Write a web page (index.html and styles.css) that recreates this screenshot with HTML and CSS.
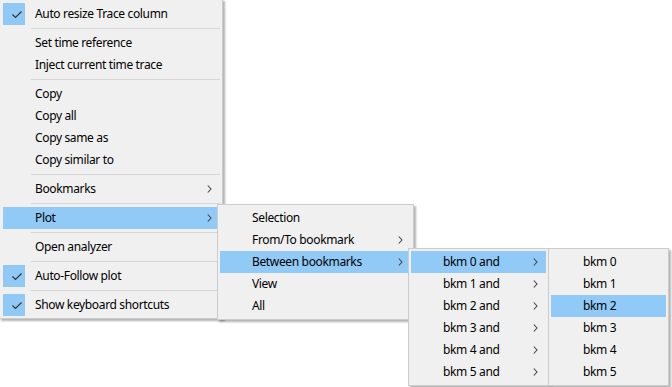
FILE: index.html
```html
<!DOCTYPE html>
<html lang="en">
<head>
  <meta charset="UTF-8">
  <meta name="viewport" content="width=device-width, initial-scale=1.0">
  <title>Trace context menu</title>
  <link rel="stylesheet" href="styles.css">
</head>
<body>

  <div class="desk">

    <div class="menu menu-main">
      <div class="item checked"><span class="gutter"><span class="check"><svg width="22" height="22" viewBox="0 0 22 22"><polyline points="9.5,11.5 12.5,14.5 18.5,8.5" fill="none" stroke="#333" stroke-width="1.2"/></svg></span></span><span class="label">Auto resize Trace column</span></div>
      <div class="sep"></div>
      <div class="item"><span class="gutter"></span><span class="label">Set time reference</span></div>
      <div class="item"><span class="gutter"></span><span class="label">Inject current time trace</span></div>
      <div class="sep"></div>
      <div class="item"><span class="gutter"></span><span class="label">Copy</span></div>
      <div class="item"><span class="gutter"></span><span class="label">Copy all</span></div>
      <div class="item"><span class="gutter"></span><span class="label">Copy same as</span></div>
      <div class="item"><span class="gutter"></span><span class="label">Copy similar to</span></div>
      <div class="sep"></div>
      <div class="item"><span class="gutter"></span><span class="label">Bookmarks</span><span class="arrow"><svg width="5" height="8" viewBox="0 0 5 8"><polyline points="0.8,0.5 4,4 0.8,7.5" fill="none" stroke="#444" stroke-width="1.1"/></svg></span></div>
      <div class="sep"></div>
      <div class="item active"><span class="gutter"></span><span class="label">Plot</span><span class="arrow"><svg width="5" height="8" viewBox="0 0 5 8"><polyline points="0.8,0.5 4,4 0.8,7.5" fill="none" stroke="#444" stroke-width="1.1"/></svg></span></div>
      <div class="sep"></div>
      <div class="item"><span class="gutter"></span><span class="label">Open analyzer</span></div>
      <div class="sep"></div>
      <div class="item checked"><span class="gutter"><span class="check"><svg width="22" height="22" viewBox="0 0 22 22"><polyline points="9.5,11.5 12.5,14.5 18.5,8.5" fill="none" stroke="#333" stroke-width="1.2"/></svg></span></span><span class="label">Auto-Follow plot</span></div>
      <div class="sep"></div>
      <div class="item checked"><span class="gutter"><span class="check"><svg width="22" height="22" viewBox="0 0 22 22"><polyline points="9.5,11.5 12.5,14.5 18.5,8.5" fill="none" stroke="#333" stroke-width="1.2"/></svg></span></span><span class="label">Show keyboard shortcuts</span></div>
    </div>

    <div class="menu menu-plot">
      <div class="item"><span class="gutter"></span><span class="label">Selection</span></div>
      <div class="item"><span class="gutter"></span><span class="label">From/To bookmark</span><span class="arrow"><svg width="5" height="8" viewBox="0 0 5 8"><polyline points="0.8,0.5 4,4 0.8,7.5" fill="none" stroke="#444" stroke-width="1.1"/></svg></span></div>
      <div class="item active"><span class="gutter"></span><span class="label">Between bookmarks</span><span class="arrow"><svg width="5" height="8" viewBox="0 0 5 8"><polyline points="0.8,0.5 4,4 0.8,7.5" fill="none" stroke="#444" stroke-width="1.1"/></svg></span></div>
      <div class="item"><span class="gutter"></span><span class="label">View</span></div>
      <div class="item"><span class="gutter"></span><span class="label">All</span></div>
    </div>

    <div class="menu menu-between">
      <div class="item active"><span class="gutter"></span><span class="label">bkm 0 and</span><span class="arrow"><svg width="5" height="8" viewBox="0 0 5 8"><polyline points="0.8,0.5 4,4 0.8,7.5" fill="none" stroke="#444" stroke-width="1.1"/></svg></span></div>
      <div class="item"><span class="gutter"></span><span class="label">bkm 1 and</span><span class="arrow"><svg width="5" height="8" viewBox="0 0 5 8"><polyline points="0.8,0.5 4,4 0.8,7.5" fill="none" stroke="#444" stroke-width="1.1"/></svg></span></div>
      <div class="item"><span class="gutter"></span><span class="label">bkm 2 and</span><span class="arrow"><svg width="5" height="8" viewBox="0 0 5 8"><polyline points="0.8,0.5 4,4 0.8,7.5" fill="none" stroke="#444" stroke-width="1.1"/></svg></span></div>
      <div class="item"><span class="gutter"></span><span class="label">bkm 3 and</span><span class="arrow"><svg width="5" height="8" viewBox="0 0 5 8"><polyline points="0.8,0.5 4,4 0.8,7.5" fill="none" stroke="#444" stroke-width="1.1"/></svg></span></div>
      <div class="item"><span class="gutter"></span><span class="label">bkm 4 and</span><span class="arrow"><svg width="5" height="8" viewBox="0 0 5 8"><polyline points="0.8,0.5 4,4 0.8,7.5" fill="none" stroke="#444" stroke-width="1.1"/></svg></span></div>
      <div class="item"><span class="gutter"></span><span class="label">bkm 5 and</span><span class="arrow"><svg width="5" height="8" viewBox="0 0 5 8"><polyline points="0.8,0.5 4,4 0.8,7.5" fill="none" stroke="#444" stroke-width="1.1"/></svg></span></div>
    </div>

    <div class="menu menu-bkm">
      <div class="item"><span class="gutter"></span><span class="label">bkm 0</span></div>
      <div class="item"><span class="gutter"></span><span class="label">bkm 1</span></div>
      <div class="item active"><span class="gutter"></span><span class="label">bkm 2</span></div>
      <div class="item"><span class="gutter"></span><span class="label">bkm 3</span></div>
      <div class="item"><span class="gutter"></span><span class="label">bkm 4</span></div>
      <div class="item"><span class="gutter"></span><span class="label">bkm 5</span></div>
    </div>

  </div>

</body>
</html>
```

FILE: styles.css
```css
body {
  margin: 0;
  background-color: #ffffff;
  font-family: "Noto Sans", "Open Sans", sans-serif;
  font-size: 12px;
  letter-spacing: -0.35px;
  color: #000000;
  overflow: hidden;
}

.desk {
  position: relative;
  width: 672px;
  height: 387px;
}

.menu {
  position: absolute;
  box-sizing: border-box;
  display: flex;
  flex-direction: column;
  padding: 2px;
  background-color: #f0f0f0;
  border: 1px solid #cccccc;
  box-shadow: 2px 2px 2px rgba(0, 0, 0, 0.3);
}

.menu-main {
  left: -1px;
  top: -1px;
  width: 224px;
  padding: 3px 2px 2px 3px;
}

.menu-plot {
  left: 217px;
  top: 204px;
  width: 197px;
}

.menu-between {
  left: 408px;
  top: 248px;
  width: 141px;
}

.menu-bkm {
  left: 548px;
  top: 248px;
  width: 121px;
}

.item {
  display: flex;
  align-items: center;
  height: 22px;
  white-space: nowrap;
}

.item.active {
  background-color: #91c9f7;
}

.gutter {
  flex: 0 0 32px;
  height: 22px;
}

.check {
  display: block;
  width: 22px;
  height: 22px;
  background-color: #90c8f6;
}

.check svg {
  display: block;
}

.label {
  flex: 1;
  line-height: 22px;
}

.arrow {
  flex: 0 0 13px;
  display: flex;
  align-items: center;
}

.arrow svg {
  display: block;
}

.sep {
  height: 1px;
  margin: 3px 0 3px 28px;
  background-color: #d7d7d7;
}
```
